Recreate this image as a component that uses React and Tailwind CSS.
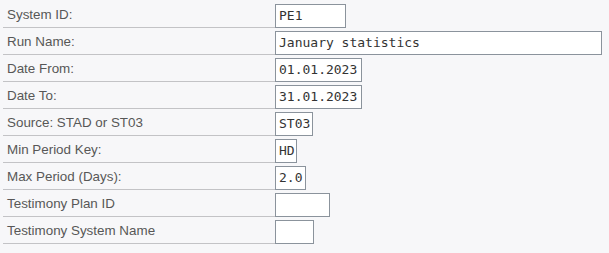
export default function App() {
  const rows = [
    { label: "System ID:", value: "PE1", w: "w-[71px]" },
    { label: "Run Name:", value: "January statistics", w: "w-[327px]" },
    { label: "Date From:", value: "01.01.2023", w: "w-[87px]" },
    { label: "Date To:", value: "31.01.2023", w: "w-[87px]" },
    { label: "Source: STAD or ST03", value: "ST03", w: "w-[38px]" },
    { label: "Min Period Key:", value: "HD", w: "w-[22px]" },
    { label: "Max Period (Days):", value: "2.0", w: "w-[31px]" },
    { label: "Testimony Plan ID", value: "", w: "w-[55px]" },
    { label: "Testimony System Name", value: "", w: "w-[39px]" },
  ];
  return (
    <div className="w-[609px] h-[253px] bg-[#f7f7f9] pt-[1px] pl-[3px]">
      {rows.map((r) => (
        <div key={r.label} className="flex items-end h-[27px]">
          <div
            className="w-[272px] h-full border-b border-[#c3c3c6] flex items-center pl-[4px] pt-[3px] text-[13.4px] text-[#575757]"
            style={{ fontFamily: '"Liberation Sans", Arial, sans-serif' }}
          >
            {r.label}
          </div>
          <div
            className={`${r.w} h-[24px] border border-[#8b939c] bg-white flex items-center pl-[3px] text-[13px] text-[#333333] whitespace-pre overflow-hidden`}
            style={{ fontFamily: '"DejaVu Sans Mono", monospace' }}
          >
            {r.value}
          </div>
        </div>
      ))}
    </div>
  );
}
